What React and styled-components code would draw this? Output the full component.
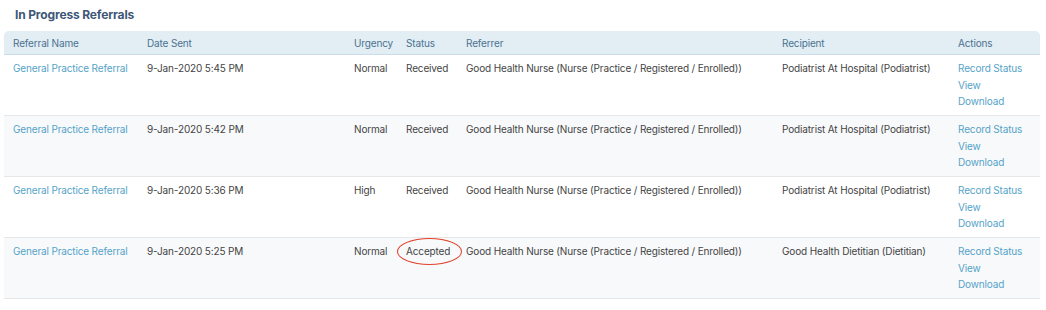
import styled, { createGlobalStyle } from 'styled-components';

const GlobalStyle = createGlobalStyle`
  body {
    margin: 0;
    background: #fff;
    font-family: "Inter", "Liberation Sans", sans-serif;
  }
`;

const Panel = styled.div`
  padding: 0 6px 0 4px;
`;

const Title = styled.h2`
  margin: 0;
  padding: 7px 0 0 11px;
  height: 31px;
  box-sizing: border-box;
  font-size: 12px;
  font-weight: 700;
  letter-spacing: -0.15px;
  color: #3d5877;
`;

const Table = styled.table`
  width: 100%;
  border-collapse: separate;
  border-spacing: 0;
  table-layout: fixed;
  font-size: 10px;
  letter-spacing: -0.15px;
  color: #444;
`;

const HeadCell = styled.th`
  background: #e3edf4;
  border-bottom: 1px solid #cadcea;
  color: #4a7391;
  font-weight: 400;
  text-align: left;
  height: 23px;
  padding: 0 0 0 9px;
  &:first-child { border-top-left-radius: 5px; }
  &:last-child { border-top-right-radius: 5px; }
`;

const Row = styled.tr`
  background: ${p => (p.$striped ? '#f8f9fb' : '#fff')};
`;

const Cell = styled.td`
  position: relative;
  vertical-align: top;
  height: 61px;
  box-sizing: border-box;
  padding: 5px 0 0 9px;
  line-height: 16.5px;
  border-bottom: 1px solid #e6e7e9;
`;

const Link = styled.a`
  display: block;
  color: #55a3c8;
  text-decoration: none;
`;

const Circle = styled.span`
  position: absolute;
  left: 0;
  top: 0;
  width: 65px;
  height: 27px;
  border: 1.7px solid #e2412b;
  border-radius: 50%;
  box-sizing: border-box;
`;

const columns = [
  ['Referral Name', 134],
  ['Date Sent', 207],
  ['Urgency', 52],
  ['Status', 60],
  ['Referrer', 316],
  ['Recipient', 176],
  ['Actions', null],
];

const referrer = 'Good Health Nurse (Nurse (Practice / Registered / Enrolled))';

const rows = [
  { date: '9-Jan-2020 5:45 PM', urgency: 'Normal', status: 'Received', recipient: 'Podiatrist At Hospital (Podiatrist)' },
  { date: '9-Jan-2020 5:42 PM', urgency: 'Normal', status: 'Received', recipient: 'Podiatrist At Hospital (Podiatrist)' },
  { date: '9-Jan-2020 5:36 PM', urgency: 'High', status: 'Received', recipient: 'Podiatrist At Hospital (Podiatrist)' },
  { date: '9-Jan-2020 5:25 PM', urgency: 'Normal', status: 'Accepted', recipient: 'Good Health Dietitian (Dietitian)', marked: true },
];

export default function App() {
  return (
    <Panel>
      <GlobalStyle />
      <Title>In Progress Referrals</Title>
      <Table>
        <colgroup>
          {columns.map(([name, w]) => (
            <col key={name} style={w ? { width: w } : undefined} />
          ))}
        </colgroup>
        <thead>
          <tr>
            {columns.map(([name]) => (
              <HeadCell key={name}>{name}</HeadCell>
            ))}
          </tr>
        </thead>
        <tbody>
          {rows.map((r, i) => (
            <Row key={i} $striped={i % 2 === 1}>
              <Cell><Link href="#">General Practice Referral</Link></Cell>
              <Cell>{r.date}</Cell>
              <Cell>{r.urgency}</Cell>
              <Cell>
                {r.marked && <Circle />}
                {r.status}
              </Cell>
              <Cell>{referrer}</Cell>
              <Cell>{r.recipient}</Cell>
              <Cell>
                <Link href="#">Record Status</Link>
                <Link href="#">View</Link>
                <Link href="#">Download</Link>
              </Cell>
            </Row>
          ))}
        </tbody>
      </Table>
    </Panel>
  );
}
